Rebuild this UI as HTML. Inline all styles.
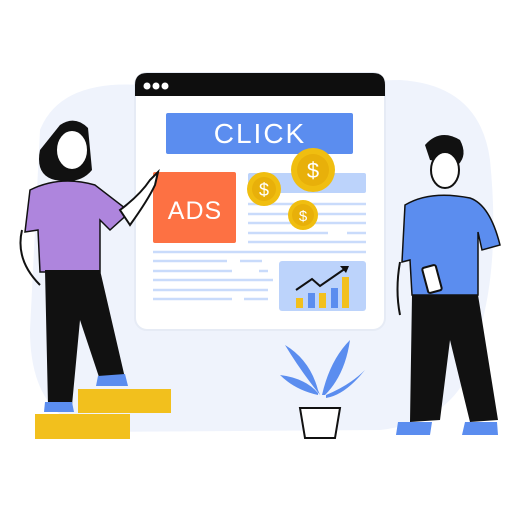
<!DOCTYPE html><html><head><style>body{margin:0;background:#fff}svg{display:block}</style></head><body>
<svg width="512" height="512" viewBox="0 0 512 512" xmlns="http://www.w3.org/2000/svg" font-family="Liberation Sans, sans-serif">
<path d="M40 130 Q60 80 140 85 L400 80 Q480 85 490 160 Q500 260 480 330 Q470 420 380 430 L100 432 Q30 420 30 330 Z" fill="#eff3fc"/>
<rect x="135" y="73" width="250" height="257" rx="12" fill="#fff" stroke="#e6ebf5" stroke-width="2"/>
<path d="M135 96 V85 Q135 73 147 73 H373 Q385 73 385 85 V96 Z" fill="#0e0e0e"/>
<circle cx="147" cy="86" r="3.5" fill="#fff"/><circle cx="156" cy="86" r="3.5" fill="#fff"/><circle cx="165" cy="86" r="3.5" fill="#fff"/>
<rect x="166" y="113" width="187" height="41" rx="2" fill="#5b8def"/>
<text x="260" y="143" font-size="28" fill="#fff" text-anchor="middle" letter-spacing="2">CLICK</text>
<rect x="153" y="172" width="83" height="71" rx="2" fill="#fd7143"/>
<text x="195" y="219" font-size="25" fill="#fff" text-anchor="middle" letter-spacing="1">ADS</text>
<rect x="248" y="173" width="118" height="20" rx="2" fill="#bcd3fb"/>
<g stroke="#c9dbfb" stroke-width="2.5">
<path d="M248 204H366M248 214H366M248 223H366M248 233H328M347 233H366M248 242H366M153 252H366M153 261H227M240 261H262M153 271H232M259 271H268M153 280H273M153 290H268M153 299H232M244 299H268"/></g>
<rect x="279" y="261" width="87" height="50" rx="3" fill="#bcd3fb"/>
<rect x="296" y="298" width="7" height="10" fill="#f2c01d"/><rect x="308" y="293" width="7" height="15" fill="#5b8def"/><rect x="319" y="293" width="7" height="15" fill="#f2c01d"/><rect x="331" y="288" width="7" height="20" fill="#5b8def"/><rect x="342" y="277" width="7" height="31" fill="#f2c01d"/>
<path d="M296 290 L312 279 L320 286 L346 268" stroke="#111" stroke-width="2" fill="none"/><path d="M340 266 L349 266 L346 273 Z" fill="#111"/>
<g font-size="18" fill="#fff" text-anchor="middle">
<circle cx="264" cy="189" r="17" fill="#f0be10"/><circle cx="264" cy="189" r="12" fill="#e8b00a"/><text x="264" y="196">$</text>
<circle cx="313" cy="170" r="22" fill="#f0be10"/><circle cx="313" cy="170" r="16" fill="#e8b00a"/><text x="313" y="178" font-size="22">$</text>
<circle cx="303" cy="215" r="15" fill="#f0be10"/><circle cx="303" cy="215" r="11" fill="#e8b00a"/><text x="303" y="221" font-size="15">$</text></g>
<!-- woman -->
<path d="M60 125 Q75 115 88 128 L92 170 Q80 185 55 180 Q35 175 40 150 Z" fill="#111"/>
<ellipse cx="72" cy="150" rx="16" ry="20" fill="#fff" stroke="#111" stroke-width="2"/>
<path d="M30 190 Q60 175 95 185 L130 212 L110 230 L100 220 L100 272 L40 272 L38 230 L25 232 Z" fill="#ae85dd" stroke="#111" stroke-width="1.5"/>
<path d="M120 210 Q140 195 150 180 L158 172 L155 185 Q148 200 130 225 Z" fill="#fff" stroke="#111" stroke-width="2"/>
<path d="M22 230 Q15 260 40 285" stroke="#111" stroke-width="2" fill="none"/>
<path d="M45 270 L100 270 L125 378 L100 380 L80 320 L72 405 L48 405 Z" fill="#111"/>
<path d="M98 376 L125 374 L128 386 L96 386 Z" fill="#5b8def"/><path d="M45 402 L72 402 L74 412 L44 412 Z" fill="#5b8def"/>
<rect x="78" y="389" width="93" height="24" fill="#f2c01d"/><rect x="35" y="414" width="95" height="25" fill="#f2c01d"/>
<!-- man -->
<path d="M425 145 Q440 128 460 140 Q468 155 458 165 L430 160 Z" fill="#111"/>
<ellipse cx="445" cy="170" rx="14" ry="18" fill="#fff" stroke="#111" stroke-width="2"/>
<path d="M405 205 Q430 190 470 198 Q490 205 500 245 L482 250 L478 232 L478 295 L412 295 L410 260 L402 262 Z" fill="#5b8def" stroke="#111" stroke-width="1.5"/>
<path d="M412 295 L478 295 L498 420 L470 422 L450 340 L440 420 L410 422 Z" fill="#111"/>
<path d="M398 422 L432 422 L430 435 L396 435 Z" fill="#5b8def"/><path d="M465 422 L497 422 L498 435 L462 435 Z" fill="#5b8def"/>
<rect x="425" y="266" width="14" height="26" rx="2" fill="#fff" stroke="#111" stroke-width="2" transform="rotate(-15 432 279)"/>
<path d="M400 262 Q395 290 400 315" stroke="#111" stroke-width="2" fill="none"/>
<!-- plant -->
<path d="M320 395 Q300 370 285 345 Q310 360 318 390 M322 395 Q330 360 350 340 Q345 375 325 395 M318 395 Q295 390 280 375 Q305 378 318 393 M326 395 Q350 385 365 370 Q345 395 326 398" fill="#5b8def"/>
<path d="M300 408 L340 408 L335 438 L305 438 Z" fill="#fff" stroke="#111" stroke-width="2"/>
</svg></body></html>
